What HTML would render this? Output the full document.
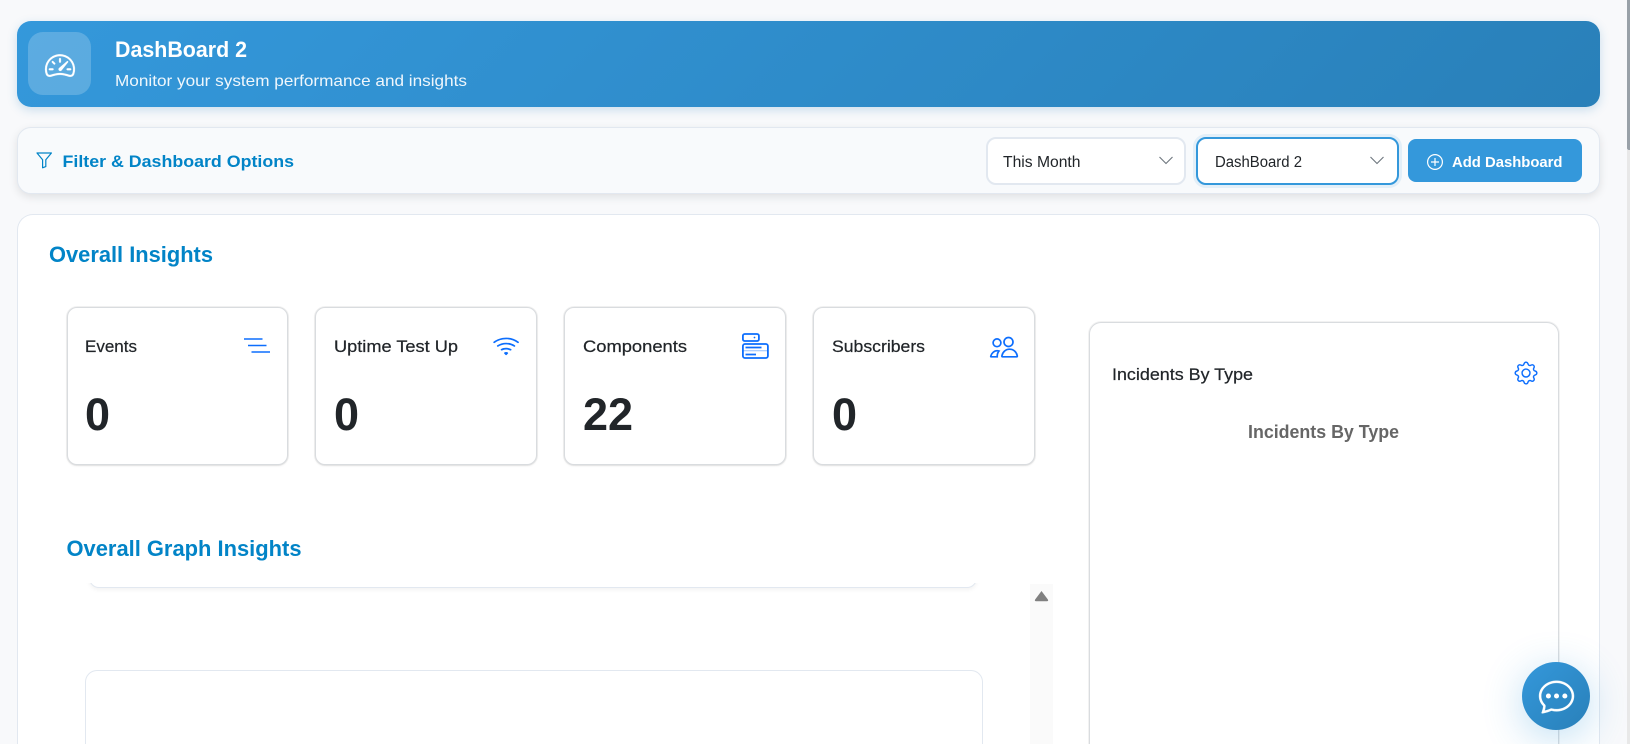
<!DOCTYPE html>
<html lang="en">
<head>
<meta charset="utf-8">
<title>DashBoard 2</title>
<style>
html,body{margin:0;padding:0;width:1630px;height:744px;overflow:hidden;background:#f8f9fb;font-family:"Liberation Sans",sans-serif}
#root{position:relative;width:1630px;height:744px;overflow:hidden;background:#f8f9fb}
.b{position:absolute;box-sizing:border-box}
#header{left:17px;top:21px;width:1583px;height:86px;border-radius:14px;background:linear-gradient(135deg,#3498db 0%,#2980b9 100%);box-shadow:0 3px 10px rgba(41,128,185,.22)}
#iconbox{left:28px;top:32px;width:63px;height:63px;border-radius:15px;background:rgba(255,255,255,.2)}
#filter{left:17px;top:127px;width:1583px;height:67px;border-radius:14px;background:#f8fafc;border:1px solid #e2e8f0;box-shadow:0 3px 9px rgba(0,0,0,.1)}
.sel{background:#fff;border-radius:10px}
#s1{left:986px;top:137px;width:200px;height:48px;border:2px solid #e2e8f0}
#s2{left:1196px;top:137px;width:203px;height:48px;border:2px solid #3498db;box-shadow:0 0 0 3px rgba(52,152,219,.1)}
#btn{left:1408px;top:139px;width:174px;height:43px;border-radius:8px;background:#3498db}
#main{left:17px;top:214px;width:1583px;height:530px;border-radius:16px 16px 0 0;background:#fff;border:1px solid #e2e8f0;border-bottom:0}
.card{top:307px;height:158px;background:#fff;border:1px solid #d9dcdf;border-radius:10px;box-shadow:0 0 0 1px rgba(0,0,0,.05),0 1px 2px rgba(0,0,0,.08)}
#rc{left:1089px;top:322px;width:470px;height:422px;background:#fff;border:1px solid #d9dcdf;border-bottom:0;border-radius:12px 12px 0 0;box-shadow:0 0 0 1px rgba(0,0,0,.05)}
#inner1{left:89px;top:540px;width:888px;height:48px;background:#fff;border:1px solid #e2e8f0;border-top:0;border-radius:0 0 10px 10px;box-shadow:0 2px 4px rgba(0,0,0,.05);clip-path:inset(43px -6px -8px -6px)}
#inner2{left:85px;top:670px;width:898px;height:74px;background:#fff;border:1px solid #e2e8f0;border-bottom:0;border-radius:12px 12px 0 0}
#track{left:1030px;top:584px;width:23px;height:160px;background:#fafafa}
#sb1{left:1627px;top:0;width:3px;height:150px;background:#99a1a8;border-radius:0 0 0 2px}
#sb2{left:1627px;top:150px;width:3px;height:594px;background:#e8e8e8}
#chat{left:1522px;top:662px;width:68px;height:68px;border-radius:50%;background:linear-gradient(135deg,#3498db,#2980b9);box-shadow:0 8px 40px rgba(52,152,219,.32)}
svg{position:absolute;left:0;top:0}
text{font-family:"Liberation Sans",sans-serif}
.blue{fill:#0d6efd}
.lbl{font-size:17px;fill:#212529;stroke:#212529;stroke-width:.22}
.val{font-size:45px;font-weight:700;fill:#212529}
.hd{font-weight:700;fill:#0284c7}
</style>
</head>
<body>
<div id="root">
<div class="b" id="header"></div>
<div class="b" id="iconbox"></div>
<div class="b" id="filter"></div>
<div class="b sel" id="s1"></div>
<div class="b sel" id="s2"></div>
<div class="b" id="btn"></div>
<div class="b" id="main"></div>
<div class="b card" style="left:67px;width:221px"></div>
<div class="b card" style="left:315px;width:222px"></div>
<div class="b card" style="left:564px;width:222px"></div>
<div class="b card" style="left:813px;width:222px"></div>
<div class="b" id="rc"></div>
<div class="b" id="inner1"></div>
<div class="b" id="inner2"></div>
<div class="b" id="track"></div>
<div class="b" id="sb1"></div>
<div class="b" id="sb2"></div>
<div class="b" id="chat"></div>

<svg width="1630" height="744" viewBox="0 0 1630 744">
  <!-- header -->
  <g transform="translate(45 50.5) scale(1.875)" fill="#fff" stroke="#fff" stroke-width=".12">
    <path d="M8 4a.5.5 0 0 1 .5.5V6a.5.5 0 0 1-1 0V4.5A.5.5 0 0 1 8 4M3.732 5.732a.5.5 0 0 1 .707 0l.915.914a.5.5 0 1 1-.708.708l-.914-.915a.5.5 0 0 1 0-.707M2 10a.5.5 0 0 1 .5-.5h1.586a.5.5 0 0 1 0 1H2.5A.5.5 0 0 1 2 10m9.5 0a.5.5 0 0 1 .5-.5h1.5a.5.5 0 0 1 0 1H12a.5.5 0 0 1-.5-.5m.754-4.246a.39.39 0 0 0-.527-.02L7.547 9.31a.91.91 0 1 0 1.302 1.258l3.434-4.297a.39.39 0 0 0-.029-.518z"/>
    <path d="M0 10a8 8 0 1 1 15.547 2.661c-.442 1.253-1.845 1.602-2.932 1.25C11.309 13.488 9.475 13 8 13c-1.474 0-3.31.488-4.615.911-1.087.352-2.49.003-2.932-1.25A8 8 0 0 1 0 10m8-7a7 7 0 0 0-6.603 9.329c.203.575.923.876 1.68.63C4.397 12.533 6.358 12 8 12s3.604.532 4.923.96c.757.245 1.477-.056 1.68-.631A7 7 0 0 0 8 3"/>
  </g>
  <text x="115" y="57" font-size="22" font-weight="700" fill="#fff" textLength="132" lengthAdjust="spacingAndGlyphs">DashBoard 2</text>
  <text x="115" y="86" font-size="16" fill="#fff" fill-opacity=".92" textLength="352" lengthAdjust="spacingAndGlyphs">Monitor your system performance and insights</text>

  <!-- filter row -->
  <path d="M37 153h14.400l-5.600 6.800v6.800l-3.200 1.200v-8z" fill="none" stroke="#0284c7" stroke-width="1.200" stroke-linejoin="round"/>
  <text x="62.500" y="167" class="hd" font-size="17" textLength="231.500" lengthAdjust="spacingAndGlyphs">Filter &amp; Dashboard Options</text>
  <text x="1003" y="167" font-size="15.500" fill="#212529" textLength="77.500" lengthAdjust="spacingAndGlyphs">This Month</text>
  <path d="M1159.500 157l6.500 6.500 6.500-6.500" fill="none" stroke="#6c757d" stroke-width="1.100"/>
  <text x="1215" y="167" font-size="15.500" fill="#212529" textLength="87" lengthAdjust="spacingAndGlyphs">DashBoard 2</text>
  <path d="M1370.500 157l6.500 6.500 6.500-6.500" fill="none" stroke="#6c757d" stroke-width="1.100"/>
  <g fill="none" stroke="#fff" stroke-width="1.200">
    <circle cx="1435" cy="162" r="7.400"/>
    <path d="M1435 158v8M1431 162h8"/>
  </g>
  <text x="1452" y="167" font-size="15" font-weight="700" fill="#fff" textLength="110.500" lengthAdjust="spacingAndGlyphs">Add Dashboard</text>

  <!-- overall -->
  <text x="49" y="262" class="hd" font-size="22" textLength="164" lengthAdjust="spacingAndGlyphs">Overall Insights</text>

  <!-- cards -->
  <text x="85" y="352" class="lbl" textLength="52" lengthAdjust="spacingAndGlyphs">Events</text>
  <text x="334" y="352" class="lbl" textLength="124" lengthAdjust="spacingAndGlyphs">Uptime Test Up</text>
  <text x="583" y="352" class="lbl" textLength="104" lengthAdjust="spacingAndGlyphs">Components</text>
  <text x="832" y="352" class="lbl" textLength="93" lengthAdjust="spacingAndGlyphs">Subscribers</text>
  <text x="85" y="430" class="val">0</text>
  <text x="334" y="430" class="val">0</text>
  <text x="583" y="430" class="val">22</text>
  <text x="832" y="430" class="val">0</text>

  <!-- events icon -->
  <path d="M244 339h18.500M248 345.500h18.500M251.500 352h18.500" stroke="#0d6efd" stroke-width="1.600" fill="none"/>
  <!-- wifi icon -->
  <g transform="translate(492.500 332.500) scale(1.700)" class="blue">
    <path d="M15.384 6.115a.485.485 0 0 0-.047-.736A12.44 12.44 0 0 0 8 3C5.259 3 2.723 3.882.663 5.379a.485.485 0 0 0-.048.736.52.52 0 0 0 .668.05A11.45 11.45 0 0 1 8 4c2.507 0 4.827.802 6.716 2.164.205.148.49.13.668-.049"/>
    <path d="M13.229 8.271a.482.482 0 0 0-.063-.745A9.46 9.46 0 0 0 8 6c-1.905 0-3.68.56-5.166 1.526a.48.48 0 0 0-.063.745.525.525 0 0 0 .652.065A8.46 8.46 0 0 1 8 7a8.46 8.46 0 0 1 4.576 1.336c.206.132.48.108.653-.065m-2.183 2.183c.226-.226.185-.605-.1-.75A6.5 6.5 0 0 0 8 9c-1.06 0-2.062.254-2.946.704-.285.145-.326.524-.1.75l.015.015c.16.16.407.19.611.09A5.500 5.500 0 0 1 8 10c.868 0 1.690.201 2.420.560.203.100.450.070.610-.091zM9.060 12.440c.196-.196.198-.520-.040-.660A2 2 0 0 0 8 11.500a2 2 0 0 0-1.020.280c-.238.140-.236.464-.040.660l.706.706a.500.500 0 0 0 .707 0l.707-.707z"/>
  </g>
  <!-- components icon -->
  <g fill="none" stroke="#0d6efd" stroke-width="1.800">
    <rect x="742.900" y="334" width="16" height="7" rx="1.800"/>
    <rect x="742.900" y="344" width="25" height="14" rx="2"/>
    <path d="M742.900 350.800h25" stroke-opacity=".45" stroke-width="1"/>
    <path d="M745.500 347.500h16M745.500 354.500h10.500"/>
  </g>
  <circle cx="754.500" cy="337.500" r=".9" fill="#0d6efd"/>
  <!-- subscribers icon -->
  <g fill="none" stroke="#0d6efd" stroke-width="1.700">
    <circle cx="1008.500" cy="342" r="4.500"/>
    <circle cx="997" cy="342.800" r="3.900"/>
    <path d="M1002.500 356.800h14.200c.5 0 .700-.4.600-.9-.7-3.800-3.600-6.700-7.700-6.700s-7 2.900-7.700 6.700c-.100.500.1.900.6.900z"/>
    <path d="M991 356.800h6.200c-.1-2.200.5-4.200 1.800-5.800-.5-.2-1.100-.3-1.800-.3-3.100 0-5.500 2.300-6.300 5.200-.1.500-.4.900.1.900z"/>
  </g>

  <!-- right card -->
  <text x="1112" y="380" class="lbl" textLength="141" lengthAdjust="spacingAndGlyphs">Incidents By Type</text>
  <g transform="translate(1514.500 361.500) scale(1.440)" class="blue">
    <path d="M8 4.754a3.246 3.246 0 1 0 0 6.492 3.246 3.246 0 0 0 0-6.492M5.754 8a2.246 2.246 0 1 1 4.492 0 2.246 2.246 0 0 1-4.492 0"/>
    <path d="M9.796 1.343c-.527-1.790-3.065-1.790-3.592 0l-.094.319a.873.873 0 0 1-1.255.520l-.292-.160c-1.640-.892-3.433.902-2.540 2.541l.159.292a.873.873 0 0 1-.520 1.255l-.319.094c-1.790.527-1.790 3.065 0 3.592l.319.094a.873.873 0 0 1 .520 1.255l-.160.292c-.892 1.640.901 3.434 2.541 2.540l.292-.159a.873.873 0 0 1 1.255.520l.094.319c.527 1.790 3.065 1.790 3.592 0l.094-.319a.873.873 0 0 1 1.255-.520l.292.160c1.640.893 3.434-.902 2.540-2.541l-.159-.292a.873.873 0 0 1 .520-1.255l.319-.094c1.790-.527 1.790-3.065 0-3.592l-.319-.094a.873.873 0 0 1-.520-1.255l.160-.292c.893-1.640-.902-3.433-2.541-2.540l-.292.159a.873.873 0 0 1-1.255-.520zm-2.633.283c.246-.835 1.428-.835 1.674 0l.094.319a1.873 1.873 0 0 0 2.693 1.115l.291-.160c.764-.415 1.600.420 1.184 1.185l-.159.292a1.873 1.873 0 0 0 1.116 2.692l.318.094c.835.246.835 1.428 0 1.674l-.319.094a1.873 1.873 0 0 0-1.115 2.693l.160.291c.415.764-.420 1.600-1.185 1.184l-.291-.159a1.873 1.873 0 0 0-2.693 1.116l-.094.318c-.246.835-1.428.835-1.674 0l-.094-.319a1.873 1.873 0 0 0-2.692-1.115l-.292.160c-.764.415-1.600-.420-1.184-1.185l.159-.291A1.873 1.873 0 0 0 1.945 8.930l-.319-.094c-.835-.246-.835-1.428 0-1.674l.319-.094A1.873 1.873 0 0 0 3.060 4.377l-.160-.292c-.415-.764.420-1.600 1.185-1.184l.292.159a1.873 1.873 0 0 0 2.692-1.115z"/>
  </g>
  <text x="1248" y="438" font-size="18" font-weight="700" fill="#666" textLength="151" lengthAdjust="spacingAndGlyphs">Incidents By Type</text>

  <!-- graph -->
  <text x="66.500" y="556" class="hd" font-size="22" textLength="235" lengthAdjust="spacingAndGlyphs">Overall Graph Insights</text>
  <path d="M1041.500 591l6.200 8.200q1.300 2-1 2h-10.400q-2.300 0-1-2z" fill="#808080"/>

  <!-- chat -->
  <g transform="translate(1539 678.500) scale(2.190)" fill="#fff">
    <circle cx="4.300" cy="8" r="1.150"/>
    <circle cx="8" cy="8" r="1.150"/>
    <circle cx="11.800" cy="8" r="1.150"/>
    <path stroke="#fff" stroke-width=".15" d="m2.165 15.803.020-.004c1.830-.363 2.948-.842 3.468-1.105A9 9 0 0 0 8 15c4.418 0 8-3.134 8-7s-3.582-7-8-7-8 3.134-8 7c0 1.760.743 3.370 1.970 4.600a10.400 10.400 0 0 1-.524 2.318l-.003.011a11 11 0 0 1-.244.637c-.079.186.074.394.273.362a22 22 0 0 0 .693-.125m.800-3.108a1 1 0 0 0-.287-.801C1.618 10.830 1 9.468 1 8c0-3.192 3.004-6 7-6s7 2.808 7 6-3.004 6-7 6a8 8 0 0 1-2.088-.272 1 1 0 0 0-.711.074c-.387.196-1.240.570-2.634.893a11 11 0 0 0 .398-2"/>
  </g>
</svg>
</div>
</body>
</html>
